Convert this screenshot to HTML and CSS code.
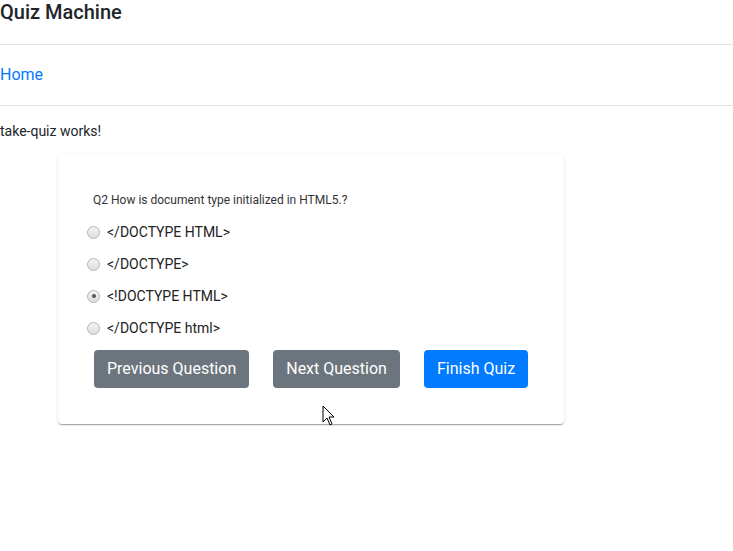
FILE: index.html
```html
<!DOCTYPE html>
<html>
<head>
<meta charset="utf-8">
<link rel="stylesheet" href="styles.css">
</head>
<body>
<header class="topbar"><h1 class="brand">Quiz Machine</h1></header>
<nav class="nav"><a class="nav-link" href="#">Home</a></nav>
<p class="status">take-quiz works!</p>
<div class="card">
  <p class="question">Q2 How is document type initialized in HTML5.?</p>
  <div class="options">
    <label class="option"><input type="radio" name="q" class="radio"><span>&lt;/DOCTYPE HTML&gt;</span></label>
    <label class="option"><input type="radio" name="q" class="radio"><span>&lt;/DOCTYPE&gt;</span></label>
    <label class="option"><input type="radio" name="q" class="radio" checked><span>&lt;!DOCTYPE HTML&gt;</span></label>
    <label class="option"><input type="radio" name="q" class="radio"><span>&lt;/DOCTYPE html&gt;</span></label>
  </div>
  <div class="actions">
    <button class="btn btn-gray">Previous Question</button>
    <button class="btn btn-gray">Next Question</button>
    <button class="btn btn-blue">Finish Quiz</button>
  </div>
</div>
<svg class="cursor" width="14" height="22" viewBox="0 0 14 22"><path d="M1 1 L1 17 L5 13 L8 20 L10 19 L7 12 L12 12 Z" fill="#fff" stroke="#000" stroke-width="1" stroke-linejoin="miter"/></svg>
</body>
</html>
```
FILE: styles.css
```css
html, body { margin: 0; padding: 0; background: #fff; }
body { font-family: Roboto, "Noto Sans", Arial, sans-serif; color: #212529; position: relative; width: 733px; height: 551px; overflow: hidden; }
.topbar { height: 44px; border-bottom: 1px solid #e3e3e3; }
.brand { margin: 0; font-size: 20px; font-weight: 500; line-height: 24px; color: #212529; }
.nav { height: 60px; border-bottom: 1px solid #e3e3e3; display: flex; align-items: center; }
.nav-link { color: #007bff; text-decoration: none; font-size: 16px; line-height: 24px; margin-top: 0; }
.status { margin: 15px 0 0; font-size: 14px; line-height: 20px; }
.card { margin: 13px 0 0 58px; width: 506px; box-sizing: border-box; height: 270px; padding: 38px 0 0 29px; border-radius: 4px; background: #fff; box-shadow: 0 2px 1px -1px rgba(0,0,0,.2), 0 1px 1px 0 rgba(0,0,0,.14), 0 1px 3px 0 rgba(0,0,0,.12); }
.question { margin: 0 0 0 6px; font-size: 12px; line-height: 16px; color: #333; }
.options { margin-top: 8px; display: flex; flex-direction: column; }
.option { display: flex; align-items: center; height: 32px; font-size: 14px; color: #222; }
.radio { appearance: none; -webkit-appearance: none; margin: 0 7px 0 0; width: 13px; height: 13px; border-radius: 50%; border: 1px solid #b4b4b4; background: linear-gradient(#f4f4f4, #dcdcdc); box-sizing: border-box; position: relative; }
.radio:checked::after { content: ""; position: absolute; left: 3.5px; top: 3.5px; width: 4px; height: 4px; border-radius: 50%; background: #555; }
.actions { display: flex; gap: 24px; margin: 6px 0 0 7px; }
.btn { font-family: Roboto, "Noto Sans", Arial, sans-serif; font-size: 16px; line-height: 24px; padding: 7px 13px; border: 0; border-radius: 4px; color: #fff; }
.btn-gray { background: #6c757d; }
.btn-blue { background: #007bff; }
.cursor { position: absolute; left: 322px; top: 405px; }
```
